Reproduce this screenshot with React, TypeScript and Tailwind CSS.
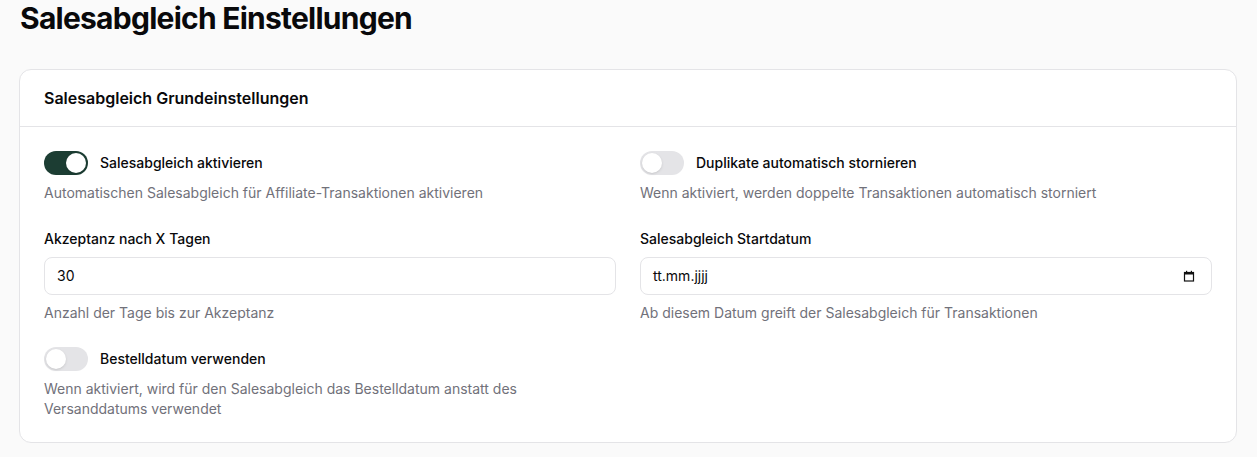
import React from "react";

function Toggle({ on }: { on: boolean }) {
  return (
    <div
      className={
        on
          ? "relative h-6 w-11 shrink-0 rounded-full bg-[#1c3d33]"
          : "relative h-6 w-11 shrink-0 rounded-full bg-[#e4e4e7]"
      }
    >
      <div
        className={
          on
            ? "absolute top-[2px] left-[22px] h-5 w-5 rounded-full bg-white shadow-sm"
            : "absolute top-[2px] left-[2px] h-5 w-5 rounded-full bg-white shadow-sm"
        }
      />
    </div>
  );
}

function CalendarIcon() {
  return (
    <svg width="12" height="12" viewBox="0 0 12 12" fill="none">
      <rect x="1.5" y="2.5" width="9" height="8.5" stroke="#111" strokeWidth="1.2" fill="none" />
      <rect x="1.5" y="2.5" width="9" height="2" fill="#111" />
      <rect x="3" y="0.8" width="1.2" height="2" fill="#111" />
      <rect x="7.8" y="0.8" width="1.2" height="2" fill="#111" />
    </svg>
  );
}

export default function App() {
  return (
    <div
      className="min-h-screen bg-[#fafafa] px-5 text-[#09090b]"
      style={{ fontFamily: "Inter, 'Noto Sans', sans-serif" }}
    >
      <h1 className="text-3xl font-bold leading-9 tracking-tight">Salesabgleich Einstellungen</h1>
      <div className="mt-[33px] ml-[-1px] rounded-xl border border-[#e4e4e7] bg-white">
        <div className="border-b border-[#e4e4e7] px-6 py-4">
          <h2 className="text-base font-semibold leading-6">Salesabgleich Grundeinstellungen</h2>
        </div>
        <div className="grid grid-cols-2 gap-x-6 gap-y-6 px-6 pt-6 pb-[23px]">
          <div>
            <div className="flex items-center gap-3">
              <Toggle on={true} />
              <span className="text-sm font-medium leading-5">Salesabgleich aktivieren</span>
            </div>
            <p className="mt-2 text-sm leading-5 text-[#71717a]">
              Automatischen Salesabgleich für Affiliate-Transaktionen aktivieren
            </p>
          </div>
          <div>
            <div className="flex items-center gap-3">
              <Toggle on={false} />
              <span className="text-sm font-medium leading-5">Duplikate automatisch stornieren</span>
            </div>
            <p className="mt-2 text-sm leading-5 text-[#71717a]">
              Wenn aktiviert, werden doppelte Transaktionen automatisch storniert
            </p>
          </div>
          <div className="pt-0.5">
            <label className="block text-sm font-medium leading-5">Akzeptanz nach X Tagen</label>
            <div className="mt-2 flex h-[38px] items-center rounded-lg border border-[#e4e4e7] bg-white px-3 text-sm">
              30
            </div>
            <p className="mt-2 text-sm leading-5 text-[#71717a]">Anzahl der Tage bis zur Akzeptanz</p>
          </div>
          <div className="pt-0.5">
            <label className="block text-sm font-medium leading-5">Salesabgleich Startdatum</label>
            <div className="mt-2 flex h-[38px] items-center justify-between rounded-lg border border-[#e4e4e7] bg-white pl-3 pr-4 text-sm">
              <span>tt.mm.jjjj</span>
              <CalendarIcon />
            </div>
            <p className="mt-2 text-sm leading-5 text-[#71717a]">
              Ab diesem Datum greift der Salesabgleich für Transaktionen
            </p>
          </div>
          <div>
            <div className="flex items-center gap-3">
              <Toggle on={false} />
              <span className="text-sm font-medium leading-5">Bestelldatum verwenden</span>
            </div>
            <p className="mt-2 text-sm leading-5 text-[#71717a]">
              Wenn aktiviert, wird für den Salesabgleich das Bestelldatum anstatt des Versanddatums verwendet
            </p>
          </div>
          <div />
        </div>
      </div>
    </div>
  );
}
